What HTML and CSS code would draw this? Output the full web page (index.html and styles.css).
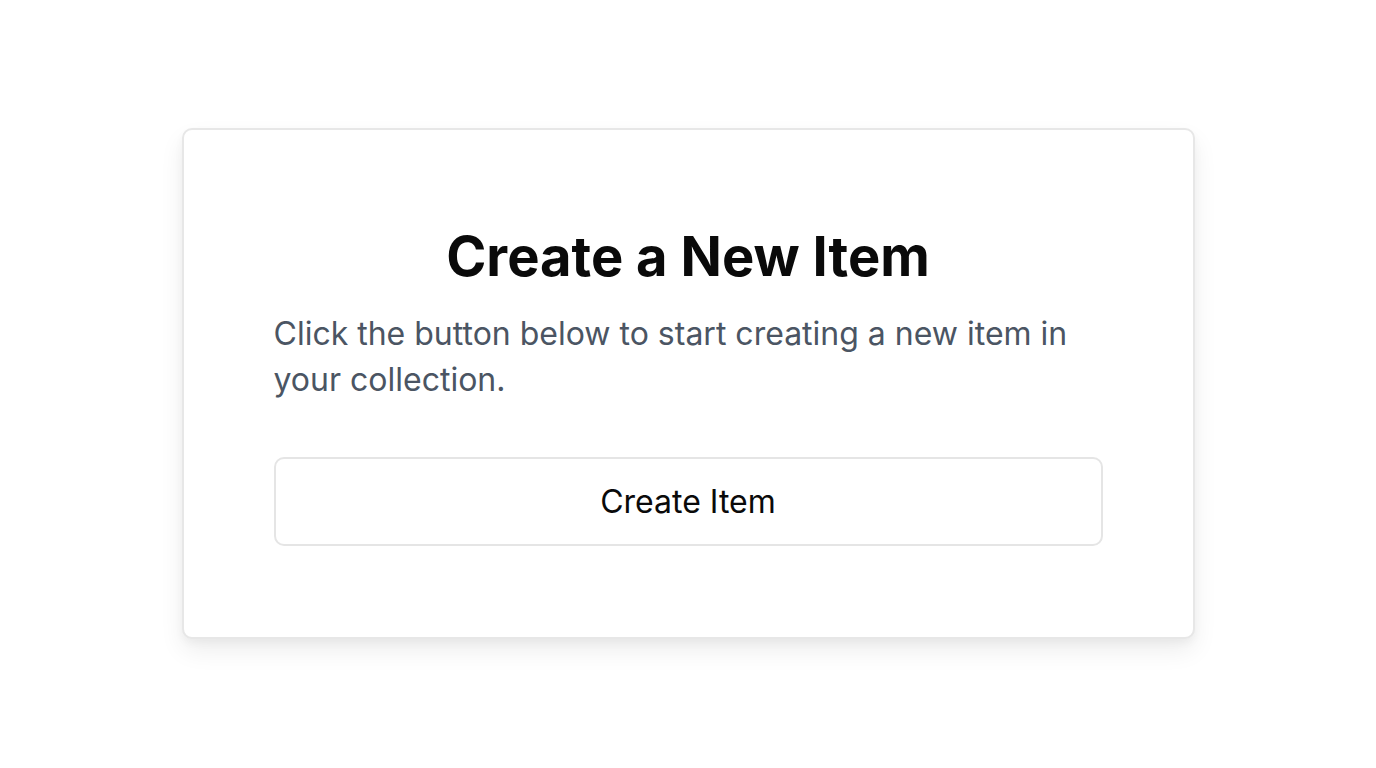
FILE: index.html
```html
<!DOCTYPE html>
<html lang="en">
<head>
<meta charset="utf-8">
<title>Create a New Item</title>
<link rel="stylesheet" href="styles.css">
</head>
<body>
<main class="page">
  <section class="card">
    <h1 class="title">Create a New Item</h1>
    <p class="desc">Click the button below to start creating a new item in your collection.</p>
    <button class="btn" type="button">Create Item</button>
  </section>
</main>
</body>
</html>
```
FILE: styles.css
```css
* { box-sizing: border-box; }
html, body { margin: 0; padding: 0; }
body {
  font-family: Inter, "Noto Sans", "Liberation Sans", sans-serif;
  background: #ffffff;
  color: #0a0a0a;
}
.page {
  min-height: 100vh;
  display: flex;
  align-items: center;
  justify-content: center;
  padding-bottom: 2px;
}
.card {
  width: 1013px;
  height: 511px;
  background: #ffffff;
  border: 2px solid #e7e7e7;
  border-radius: 10px;
  box-shadow: 0 12px 24px rgba(0, 0, 0, 0.07), 0 4px 8px rgba(0, 0, 0, 0.04);
  padding: 94px 90px 90px;
  display: flex;
  flex-direction: column;
}
.title {
  margin: 0;
  font-size: 54.3px;
  font-weight: 700;
  line-height: 64px;
  text-align: center;
  color: #0a0a0a;
}
.desc {
  margin: 23px 0 0;
  font-size: 32px;
  line-height: 46px;
  color: #4b5563;
}
.btn {
  margin-top: 54px;
  width: 100%;
  height: 89px;
  flex-shrink: 0;
  background: #ffffff;
  border: 2px solid #e5e5e5;
  border-radius: 10px;
  font-family: inherit;
  font-size: 32px;
  color: #0a0a0a;
  cursor: pointer;
}
```
